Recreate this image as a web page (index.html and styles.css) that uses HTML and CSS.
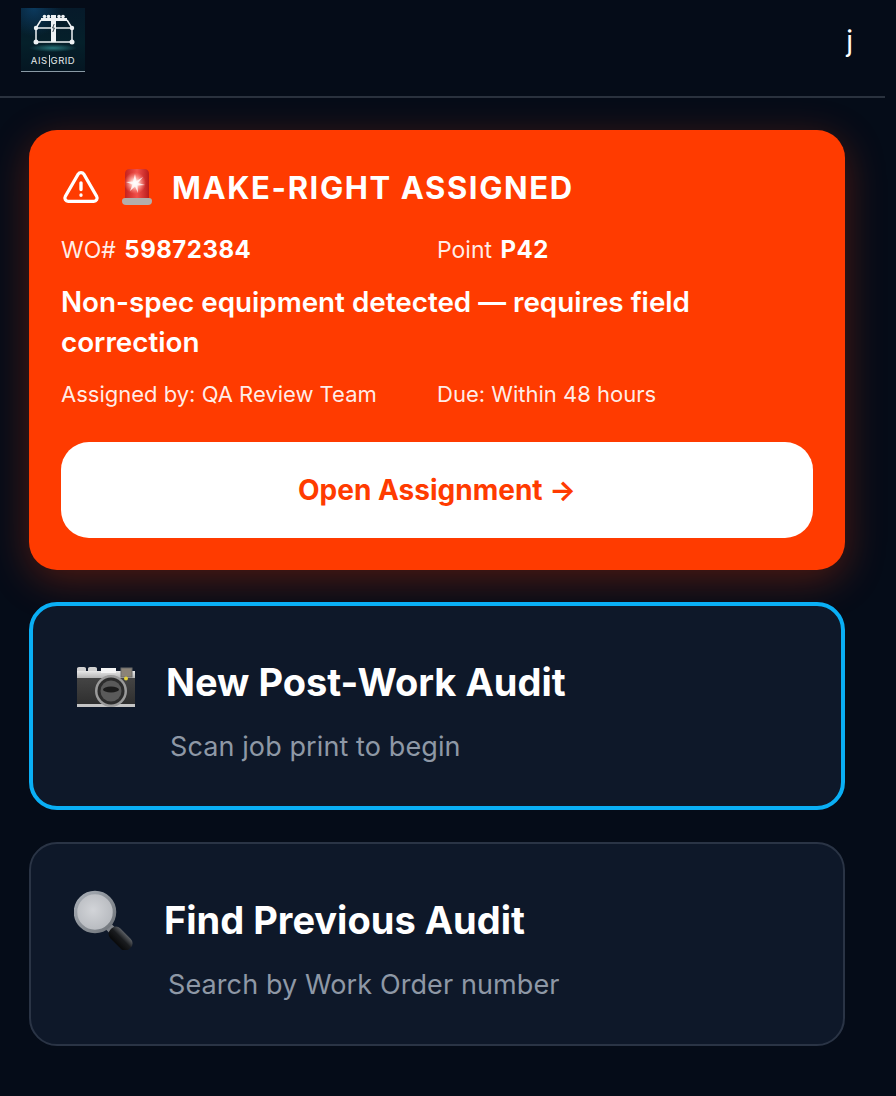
FILE: index.html
```html
<!DOCTYPE html>
<html lang="en">
<head>
    <meta charset="UTF-8">
    <meta name="viewport" content="width=device-width, initial-scale=1.0">
    <title>AIS Grid</title>
    <link rel="stylesheet" href="styles.css">
</head>
<body>
    <header class="topbar">
        <div class="logo">
            <svg class="logo-mark" viewBox="0 0 64 46" width="64" height="46">
                <defs>
                    <radialGradient id="logoGlow">
                        <stop offset="0" stop-color="#2f8a8e" stop-opacity="0.8"/>
                        <stop offset="1" stop-color="#2f8a8e" stop-opacity="0"/>
                    </radialGradient>
                </defs>
                <ellipse cx="32" cy="40" rx="24" ry="4" fill="url(#logoGlow)"/>
                <path d="M15 20H51M15 34H51M15 20V34M51 20V34M20 12 15 20M46 12 51 20" fill="none" stroke="#eef2f4" stroke-width="1.500"/>
                <path d="M20 10H46V13H20Z" fill="#eef2f4"/>
                <path d="M30 7H35V34H30Z" fill="#eef2f4"/>
                <g fill="#eef2f4">
                    <circle cx="23.500" cy="8.500" r="1.800"/><circle cx="27.500" cy="8.500" r="1.800"/>
                    <circle cx="38" cy="8.500" r="1.800"/><circle cx="42" cy="8.500" r="1.800"/>
                    <circle cx="15" cy="20" r="2.200"/><circle cx="51" cy="20" r="2.200"/>
                    <circle cx="15" cy="34" r="2.500"/><circle cx="51" cy="34" r="2.500"/>
                </g>
                <path d="M33.200 16 31.600 20H33.400L31.800 24" fill="none" stroke="#10212c" stroke-width="0.800"/>
            </svg>
            <span class="logo-text">AIS<i class="logo-sep"></i>GRID</span>
        </div>
        <span class="user-initial">j</span>
    </header>

    <main class="content">
        <section class="alert-card">
            <h2 class="alert-title">
                <svg class="warn-icon" viewBox="0 0 24 24" width="40" height="40">
                    <path d="M10.300 4.300 2.600 17.600A2 2 0 0 0 4.300 20.600H19.700A2 2 0 0 0 21.400 17.600L13.700 4.300A2 2 0 0 0 10.300 4.300Z" fill="none" stroke="#fff" stroke-width="1.900" stroke-linejoin="round"/>
                    <path d="M12 9.500V13.500M12 16.800V17" fill="none" stroke="#fff" stroke-width="2" stroke-linecap="round"/>
                </svg>
                <svg class="siren-icon" viewBox="0 0 32 38" width="32" height="38">
                    <defs>
                        <linearGradient id="sirenBody" x1="0" y1="0" x2="1" y2="0">
                            <stop offset="0" stop-color="#c4231f"/>
                            <stop offset="0.5" stop-color="#f2504a"/>
                            <stop offset="1" stop-color="#b91c1c"/>
                        </linearGradient>
                        <radialGradient id="sirenGlow">
                            <stop offset="0" stop-color="#fff"/>
                            <stop offset="0.35" stop-color="#ffc4bd"/>
                            <stop offset="1" stop-color="#ff8a80" stop-opacity="0"/>
                        </radialGradient>
                    </defs>
                    <path d="M4 6Q4 1 9 1H23Q28 1 28 6V31H4Z" fill="url(#sirenBody)"/>
                    <circle cx="14" cy="15" r="11" fill="url(#sirenGlow)"/>
                    <path d="M14 6 15.500 13 22 9 17 15 24 17 16.500 17.500 17 25 14 18.500 9 23 11.500 16.500 5 14 12 13.500Z" fill="#fff" opacity="0.8"/>
                    <path d="M1 33Q1 30 4 30H28Q31 30 31 33Q31 37 27 37H5Q1 37 1 33Z" fill="#b3aeaa"/>
                </svg>
                <span>MAKE-RIGHT ASSIGNED</span>
            </h2>
            <div class="alert-row alert-ids">
                <span>WO# <b>59872384</b></span>
                <span>Point <b>P42</b></span>
            </div>
            <p class="alert-desc">Non-spec equipment detected — requires field correction</p>
            <div class="alert-row alert-meta">
                <span>Assigned by: QA Review Team</span>
                <span>Due: Within 48 hours</span>
            </div>
            <button class="open-btn">Open Assignment →</button>
        </section>

        <section class="action-card action-primary">
            <div class="action-head">
                <svg class="action-icon camera-icon" viewBox="0 0 60 42" width="60" height="42">
                    <defs>
                        <linearGradient id="camTop" x1="0" y1="0" x2="0" y2="1">
                            <stop offset="0" stop-color="#e8e8e8"/>
                            <stop offset="1" stop-color="#b4b4b4"/>
                        </linearGradient>
                        <linearGradient id="camBody" x1="0" y1="0" x2="0" y2="1">
                            <stop offset="0" stop-color="#4a4a4a"/>
                            <stop offset="1" stop-color="#2e2e2e"/>
                        </linearGradient>
                    </defs>
                    <path d="M1 5H59V39H1Z" fill="url(#camBody)"/>
                    <path d="M1 5V2.500Q1 1 3 1H8Q10 1 10 2.500V5M12 5V2.500Q12 1 14 1H19Q21 1 21 2.500V5Z" fill="#d0d0d0"/>
                    <path d="M1 5H59V12H1Z" fill="url(#camTop)"/>
                    <path d="M1 38H59V41H1Z" fill="#c4c4c4"/>
                    <rect x="25" y="2" width="15" height="5" fill="#f4f4f4"/>
                    <rect x="45" y="2" width="11" height="9" fill="#8b8378" stroke="#6a6a6a" stroke-width="1"/>
                    <circle cx="50" cy="12.500" r="2" fill="#e6d23c"/>
                    <circle cx="35" cy="25" r="16" fill="#9a9a9a"/>
                    <circle cx="35" cy="25" r="13.500" fill="#2c2c2c"/>
                    <circle cx="35" cy="25" r="10.500" fill="#5a5a5a"/>
                    <ellipse cx="35" cy="23.500" rx="8" ry="3" fill="#1c1c1c"/>
                </svg>
                <h3 class="action-title">New Post-Work Audit</h3>
            </div>
            <p class="action-sub">Scan job print to begin</p>
        </section>

        <section class="action-card action-secondary">
            <div class="action-head">
                <svg class="action-icon" viewBox="0 0 60 60" width="60" height="60">
                    <defs>
                        <radialGradient id="lensFill" cx="0.45" cy="0.45">
                            <stop offset="0" stop-color="#d2d4d8"/>
                            <stop offset="1" stop-color="#b9bcc1"/>
                        </radialGradient>
                        <linearGradient id="lensRim" x1="0" y1="0" x2="1" y2="1">
                            <stop offset="0" stop-color="#aab0b8"/>
                            <stop offset="1" stop-color="#6d7278"/>
                        </linearGradient>
                        <linearGradient id="handleFill" x1="0" y1="0" x2="0" y2="1">
                            <stop offset="0" stop-color="#5c6065"/>
                            <stop offset="0.45" stop-color="#1a1c1f"/>
                            <stop offset="1" stop-color="#08090a"/>
                        </linearGradient>
                    </defs>
                    <path d="M34 36 39 41" stroke="#82868c" stroke-width="8"/>
                    <rect x="0" y="-7" width="27" height="14" rx="6" fill="url(#handleFill)" transform="translate(37 39) rotate(45)"/>
                    <circle cx="21" cy="22" r="19.500" fill="url(#lensFill)" stroke="url(#lensRim)" stroke-width="3.500"/>
                </svg>
                <h3 class="action-title">Find Previous Audit</h3>
            </div>
            <p class="action-sub">Search by Work Order number</p>
        </section>
    </main>
</body>
</html>
```

FILE: styles.css
```css
* {
    margin: 0;
    padding: 0;
    box-sizing: border-box;
}
html, body {
    height: 100%;
}
body {
    font-family: 'Inter', 'Liberation Sans', sans-serif;
    background-color: #050c18;
    color: #fff;
    overflow: hidden;
}
.topbar {
    width: 885px;
    height: 98px;
    padding: 8px 32px 0 21px;
    display: flex;
    justify-content: space-between;
    align-items: flex-start;
    border-bottom: 2px solid #2a323e;
}
.logo {
    width: 64px;
    height: 64px;
    display: flex;
    flex-direction: column;
    align-items: center;
    background: radial-gradient(circle at 20% 0%, #0b3a5e 0%, transparent 35%), linear-gradient(180deg, #061a2a 0%, #05202a 55%, #051622 100%);
    border-bottom: 1px solid #8a9aa5;
}
.logo-mark {
    display: block;
}
.logo-text {
    display: flex;
    align-items: center;
    font-size: 9.500px;
    font-weight: 400;
    letter-spacing: 0.5px;
    color: #e6eaec;
    line-height: 14px;
}
.logo-sep {
    display: inline-block;
    width: 1px;
    height: 12px;
    margin: 0 1px;
    background-color: #c8d0d4;
}
.user-initial {
    margin-top: 16px;
    font-size: 28px;
    line-height: 34px;
    color: #fff;
}
.content {
    width: 816px;
    margin: 32px 0 0 29px;
    display: flex;
    flex-direction: column;
}
.alert-card {
    height: 440px;
    padding: 32px;
    background-color: #ff3b00;
    border-radius: 28px;
    box-shadow: 0 10px 40px rgba(255, 59, 0, 0.3);
}
.alert-title {
    display: flex;
    align-items: center;
    height: 50px;
    font-size: 31px;
    font-weight: 700;
    letter-spacing: 1.600px;
}
.warn-icon {
    margin-right: 20px;
}
.siren-icon {
    margin-right: 19px;
}
.alert-row {
    display: grid;
    grid-template-columns: 376px 376px;
    color: rgba(255, 255, 255, 0.92);
}
.alert-ids {
    margin-top: 23px;
    font-size: 23px;
    line-height: 30px;
}
.alert-ids b {
    margin-left: 2px;
    font-size: 24px;
    font-weight: 700;
    letter-spacing: 0.5px;
    color: #fff;
}
.alert-desc {
    margin-top: 17px;
    font-size: 27.800px;
    font-weight: 600;
    line-height: 40px;
}
.alert-meta {
    margin-top: 17px;
    font-size: 22px;
    line-height: 30px;
}
.open-btn {
    display: block;
    width: 100%;
    height: 96px;
    margin-top: 33px;
    background-color: #fff;
    color: #ff3b00;
    border: none;
    border-radius: 28px;
    font-family: inherit;
    font-size: 28px;
    font-weight: 700;
}
.action-card {
    background-color: #0e1829;
    border-radius: 28px;
}
.action-primary {
    height: 208px;
    margin-top: 32px;
    padding: 51px 32px 0 43px;
    border: 4px solid #0aaff5;
}
.action-secondary {
    height: 204px;
    margin-top: 32px;
    padding: 51px 32px 0 43px;
    border: 2px solid #2a3445;
}
.action-head {
    display: flex;
    align-items: center;
    gap: 30px;
    height: 50px;
}
.action-icon {
    flex-shrink: 0;
}
.camera-icon {
    margin-top: 10px;
}
.action-title {
    font-size: 38px;
    font-weight: 700;
    line-height: 50px;
}
.action-sub {
    margin-top: 22px;
    padding-left: 94px;
    font-size: 27px;
    letter-spacing: 0.1px;
    line-height: 36px;
    color: #8e98a6;
}
```
